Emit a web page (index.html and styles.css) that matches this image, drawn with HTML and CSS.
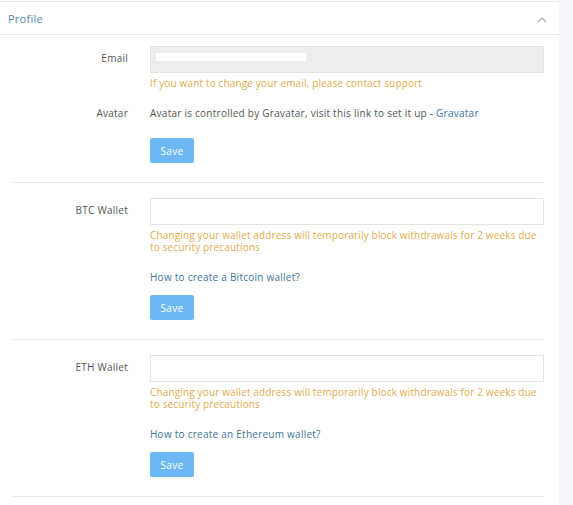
FILE: index.html
```html
<!DOCTYPE html>
<html>
<head>
<meta charset="utf-8">
<link rel="stylesheet" href="styles.css">
</head>
<body>
<div class="page">
  <div class="panel">
    <div class="panel-head">
      <span class="panel-title">Profile</span>
      <svg class="chev" width="10" height="7" viewBox="0 0 10 7"><path d="M1 6 L5 2 L9 6" fill="none" stroke="#bbb" stroke-width="1.4"/></svg>
    </div>
    <div class="panel-body">
      <div class="section first">
        <div class="row">
          <div class="label">Email</div>
          <div class="field">
            <div class="input filled"><span class="blur"></span></div>
            <div class="hint">If you want to change your email, please contact support</div>
          </div>
        </div>
        <div class="row avatar-row">
          <div class="label plain">Avatar</div>
          <div class="field">
            <div class="text">Avatar is controlled by Gravatar, visit this link to set it up - <a class="link" href="#">Gravatar</a></div>
            <button class="btn">Save</button>
          </div>
        </div>
      </div>
      <div class="section">
        <div class="row">
          <div class="label">BTC Wallet</div>
          <div class="field">
            <div class="input"></div>
            <div class="hint">Changing your wallet address will temporarily block withdrawals for 2 weeks due to security precautions</div>
            <a class="link block" href="#">How to create a Bitcoin wallet?</a>
            <button class="btn">Save</button>
          </div>
        </div>
      </div>
      <div class="section">
        <div class="row">
          <div class="label">ETH Wallet</div>
          <div class="field">
            <div class="input"></div>
            <div class="hint">Changing your wallet address will temporarily block withdrawals for 2 weeks due to security precautions</div>
            <a class="link block" href="#">How to create an Ethereum wallet?</a>
            <button class="btn">Save</button>
          </div>
        </div>
      </div>
    </div>
  </div>
  <div class="side"></div>
</div>
</body>
</html>
```
FILE: styles.css
```css
html, body {
  margin: 0;
  padding: 0;
  background: #fff;
}
body {
  font-family: "Open Sans", "DejaVu Sans", sans-serif;
  font-size: 10px;
  color: #555;
  letter-spacing: 0.25px;
}
.page {
  display: flex;
  width: 573px;
  height: 505px;
  overflow: hidden;
}
.panel {
  width: 559px;
  flex: none;
  border-top: 1px solid #ececec;
  margin-top: 1px;
}
.side {
  flex: 1;
  background: #f4f6f9;
}
.panel-head {
  display: flex;
  align-items: center;
  justify-content: space-between;
  height: 32px;
  padding: 0 12px 0 8px;
  border-bottom: 1px solid #e6e6e6;
}
.panel-title {
  font-size: 11px;
  color: #4f86a6;
}
.chev {
  margin-top: 2px;
}
.panel-body {
  padding: 0 15px 0 12px;
}
.section {
  padding: 15px 0 19px;
  border-bottom: 1px solid #ebebeb;
}
.section.first {
  padding-top: 11px;
}
.row {
  display: grid;
  grid-template-columns: 116px 1fr;
  column-gap: 22px;
}
.label {
  text-align: right;
  padding-top: 6px;
  line-height: 12px;
  color: #555;
}
.label.plain {
  padding-top: 0;
}
.field {
  display: flex;
  flex-direction: column;
  align-items: flex-start;
}
.input {
  align-self: stretch;
  height: 25px;
  border: 1px solid #e4e4e4;
  background: #fff;
  position: relative;
}
.input.filled {
  background: #ededed;
}
.blur {
  position: absolute;
  left: 5px;
  top: 6px;
  width: 150px;
  height: 8px;
  background: #fff;
}
.hint {
  margin-top: 4px;
  line-height: 12px;
  color: #e2ac4c;
  letter-spacing: 0.15px;
}
.avatar-row {
  margin-top: 18px;
}
.text {
  line-height: 12px;
}
.link {
  color: #3a7599;
  text-decoration: none;
}
.link.block {
  display: block;
  margin-top: 18px;
  line-height: 12px;
}
.btn {
  margin-top: 19px;
  width: 44px;
  height: 25px;
  border: none;
  border-radius: 2px;
  background: #6cb8f4;
  color: #fff;
  font-family: inherit;
  font-size: 10px;
  letter-spacing: 0.3px;
  padding: 0;
  cursor: pointer;
}
.link.block + .btn {
  margin-top: 12px;
}
```
